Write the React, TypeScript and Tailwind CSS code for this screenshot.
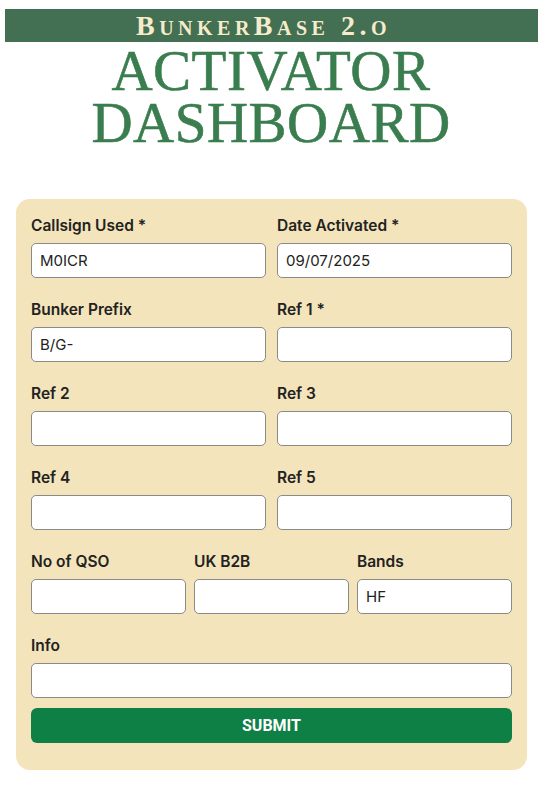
import { ReactNode } from 'react';

const serif = { fontFamily: '"Liberation Serif", "DejaVu Serif", serif' };

function Field({ label, value = '' }: { label: string; value?: string }) {
  return (
    <div className="flex flex-col">
      <label className="h-5 text-[15.5px] leading-5 font-semibold text-[#222]">{label}</label>
      <input
        readOnly
        value={value}
        className="mt-[7px] h-[35px] w-full rounded-[5px] border border-[#8a8a8a] bg-white px-[8px] text-[15px] text-[#222] outline-none"
      />
    </div>
  );
}

function Row({ cols = 2, children }: { cols?: number; children: ReactNode }) {
  return (
    <div className={cols === 3 ? 'grid grid-cols-3 gap-2' : 'grid grid-cols-2 gap-[11px]'}>
      {children}
    </div>
  );
}

export default function App() {
  return (
    <div className="min-h-screen bg-white pt-[9px]" style={{ fontFamily: 'Inter, "Liberation Sans", sans-serif' }}>
      {/* Brand bar */}
      <div className="mx-[5px] flex h-[33px] w-[533px] items-center justify-center bg-[#436f53]">
        <span
          className="pr-[16px] text-[28px] leading-none font-bold tracking-[4.5px] text-[#f6ebcb] [font-variant:small-caps]"
          style={serif}
        >
          BunkerBase 2.o
        </span>
      </div>

      {/* Title */}
      <div
        className="mt-[3px] flex flex-col items-center text-[57px] leading-[52px] tracking-[0.5px] text-[#3a7d4f] [-webkit-text-stroke:0.6px_#3a7d4f]"
        style={serif}
      >
        <h1 className="font-normal">ACTIVATOR</h1>
        <h1 className="font-normal">DASHBOARD</h1>
      </div>

      {/* Form card */}
      <div className="mx-4 mt-[50px] w-[511px] rounded-[14px] bg-[#f4e4bb] px-[15px] pt-[17px] pb-[27px]">
        <div className="flex flex-col gap-[22px]">
          <Row>
            <Field label="Callsign Used *" value="M0ICR" />
            <Field label="Date Activated *" value="09/07/2025" />
          </Row>
          <Row>
            <Field label="Bunker Prefix" value="B/G-" />
            <Field label="Ref 1 *" />
          </Row>
          <Row>
            <Field label="Ref 2" />
            <Field label="Ref 3" />
          </Row>
          <Row>
            <Field label="Ref 4" />
            <Field label="Ref 5" />
          </Row>
          <Row cols={3}>
            <Field label="No of QSO" />
            <Field label="UK B2B" />
            <Field label="Bands" value="HF" />
          </Row>
          <Field label="Info" />
        </div>
        <button
          className="mt-[10px] h-[35px] w-full rounded-md bg-[#0e7f45] text-[16px] font-bold text-white"
          style={{ fontFamily: 'Roboto, "Liberation Sans", sans-serif' }}
        >
          SUBMIT
        </button>
      </div>
    </div>
  );
}
